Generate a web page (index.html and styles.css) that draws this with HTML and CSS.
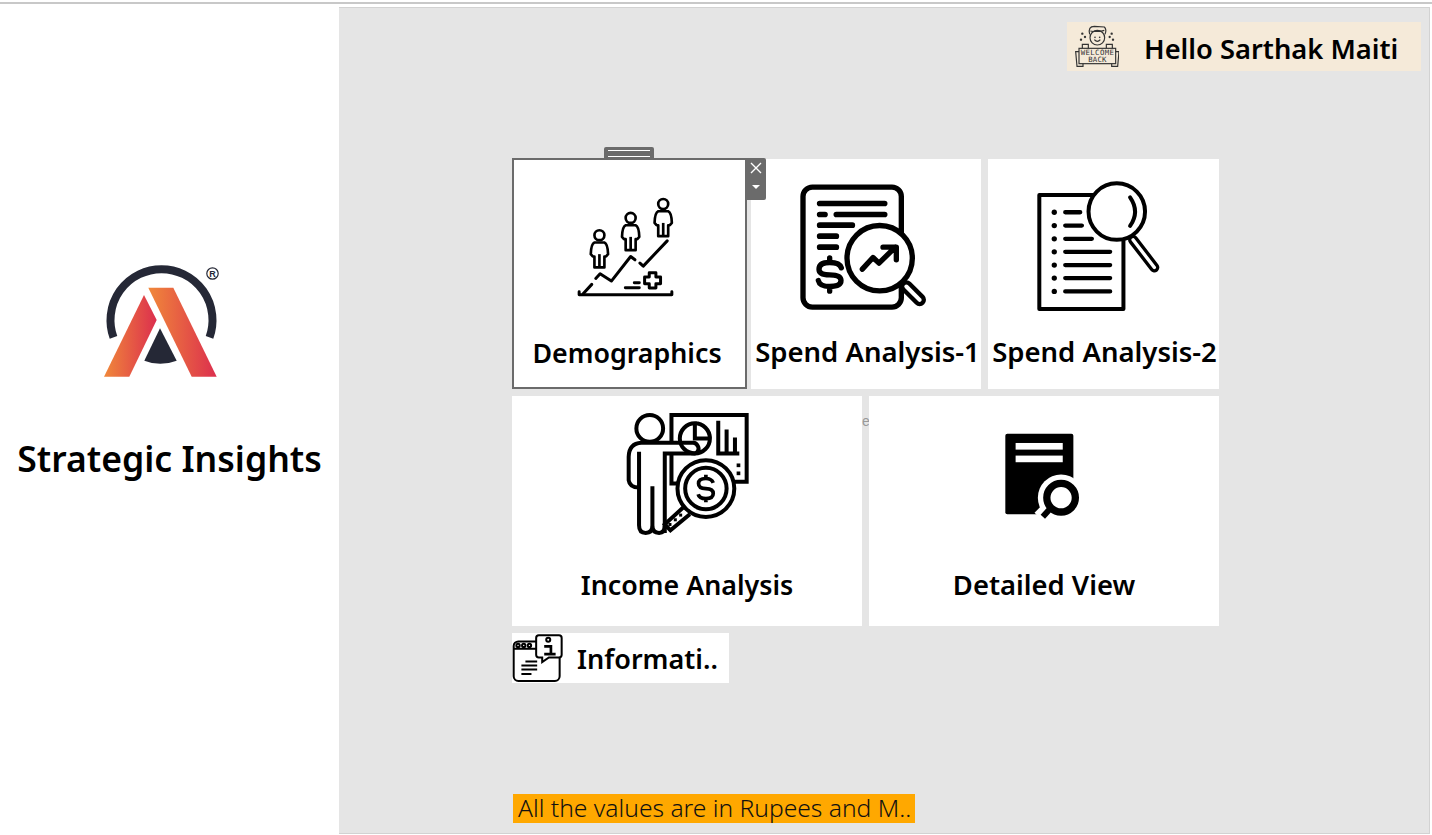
FILE: index.html
```html
<!doctype html>
<html>
	<head>
		<meta charset="utf-8" />
		<title>Strategic Insights</title>
		<link rel="stylesheet" href="styles.css">
	</head>
	<body>
		<div class="topline"></div>
		<div class="app">
			<aside class="side">
				<svg class="logo" viewBox="100 262 122 118" width="122" height="118">
					<defs>
						<linearGradient id="g-right" x1="0" y1="0" x2="1" y2="0">
							<stop offset="0" stop-color="#f0883a"/>
							<stop offset="1" stop-color="#dc2f4e"/>
						</linearGradient>
						<linearGradient id="g-left" x1="0" y1="0" x2="1" y2="0">
							<stop offset="0" stop-color="#f0883a"/>
							<stop offset="1" stop-color="#dc2f4e"/>
						</linearGradient>
					</defs>
					<path d="M113.5 342 A51 51 0 1 1 209.5 342" transform="translate(0 -4.6)" fill="none" stroke="#252836" stroke-width="8"/>
					<path d="M148.3 287.7 H173.3 L216.7 376.7 H191.7 Z" fill="url(#g-right)"/>
					<path d="M144 295 L156.7 320 L129.3 376.7 H104 Z" fill="url(#g-left)"/>
					<path d="M160 328.3 L176.7 360.7 Q160 367 144.3 360.7 Z" fill="#252836"/>
					<circle cx="212.5" cy="273.5" r="5.7" fill="none" stroke="#252836" stroke-width="1.2"/>
					<text x="212.5" y="276.9" class="logo-r">R</text>
				</svg>
				<h1 class="brand">Strategic Insights</h1>
			</aside>

			<main class="canvas">
				<div class="hello">
					<svg class="hello-icon" viewBox="15 15 135 135" width="45" height="45">
						<g fill="none" stroke="#333" stroke-width="3.5">
							<path d="M62 46 Q56 22 76 22 L106 24 Q114 32 108 46 M64 36 Q85 40 106 34"/>
							<circle cx="85" cy="56" r="22"/>
							<path d="M76 62 Q85 72 94 62"/>
							<path d="M40 88 V76 H58 V88 M112 88 V76 H130 V88"/>
							<rect x="30" y="88" width="110" height="46"/>
							<path d="M30 98 H20 L24 142 H42 V134 M140 98 H150 L146 142 H128 V134"/>
						</g>
						<g fill="#333">
							<circle cx="78" cy="55" r="2.5"/>
							<circle cx="92" cy="55" r="2.5"/>
							<circle cx="40" cy="44" r="3.5"/>
							<circle cx="48" cy="54" r="3.5"/>
							<circle cx="36" cy="62" r="3.5"/>
							<circle cx="128" cy="44" r="3.5"/>
							<circle cx="122" cy="54" r="3.5"/>
							<circle cx="132" cy="62" r="3.5"/>
						</g>
						<text x="35" y="108" class="hello-sign" textLength="100">WELCOME</text>
						<text x="58" y="128" class="hello-sign" textLength="54">BACK</text>
					</svg>
					<span class="hello-name">Hello Sarthak Maiti</span>
				</div>

				<div class="board">
					<div class="row">
						<a class="tile tile-demo is-selected">
							<span class="grip"></span>
							<span class="controls">
								<svg viewBox="0 0 12 12" width="12" height="12"><path d="M1 1 L11 11 M11 1 L1 11" stroke="#fff" stroke-width="1.4"/></svg>
								<i class="caret"></i>
							</span>
							<svg class="icon icon-demo" viewBox="210 170 300 310" width="100" height="103">
								<defs>
									<g id="person" fill="none" stroke="#000" stroke-width="8" stroke-linejoin="round">
										<circle cx="283" cy="288" r="15"/>
										<path d="M268 310 H298 Q308 314 309 345 L303 352 H298 V385 H268 V352 H263 L257 345 Q258 314 268 310 Z"/>
										<path d="M283 345 V385"/>
									</g>
								</defs>
								<use href="#person"/>
								<use href="#person" x="94" y="-52"/>
								<use href="#person" x="192" y="-94"/>
								<g fill="none" stroke="#000" stroke-width="9" stroke-linecap="round" stroke-linejoin="round">
									<path d="M222 458 V467 H501 V458"/>
									<path d="M234 464 L260 436"/>
									<path d="M272 418 L285 404 L319 426 L377 352 L390 362"/>
									<path d="M405 372 L415 381 L487 305"/>
									<path d="M361 446 H403 M388 431 H403"/>
									<path d="M433 401 H453 V414 H467 V434 H453 V447 H433 V434 H419 V414 H433 Z"/>
								</g>
							</svg>
							<span class="tile-label">Demographics</span>
						</a>
						<a class="tile tile-spend1">
							<svg class="icon icon-spend1" viewBox="145 70 390 380" width="130" height="127">
								<rect x="160" y="82" width="295" height="360" rx="28" fill="none" stroke="#000" stroke-width="16"/>
								<path d="M470 380 L510 420" stroke="#000" stroke-width="38" stroke-linecap="round"/>
								<path d="M470 380 L510 420" stroke="#fff" stroke-width="12" stroke-linecap="round"/>
								<circle cx="390" cy="295" r="98" fill="#fff" stroke="#000" stroke-width="16"/>
								<g fill="none" stroke="#000" stroke-linecap="round" stroke-linejoin="round">
									<path stroke-width="17" d="M210 131 H405 M210 164 H226 M260 164 H405 M210 196 H308 M210 229 H260 M210 262 H260"/>
									<path stroke-width="16" d="M275 324 Q270 308 240 308 Q208 308 208 328 Q208 345 240 345 Q274 345 274 362 Q274 380 240 380 Q210 380 206 362 M240 294 V308 M240 380 V394"/>
									<path stroke-width="16" d="M338 328 L370 293 L388 310 L437 262 M400 262 H440 V300"/>
								</g>
							</svg>
							<span class="tile-label">Spend Analysis-1</span>
						</a>
						<a class="tile tile-spend2">
							<svg class="icon icon-spend2" viewBox="150 60 380 400" width="127" height="133">
								<rect x="162" y="105" width="253" height="343" fill="none" stroke="#000" stroke-width="12" stroke-linejoin="round"/>
								<path d="M444 240 L508 323" stroke="#000" stroke-width="30" stroke-linecap="round"/>
								<path d="M444 240 L508 323" stroke="#fff" stroke-width="10" stroke-linecap="round"/>
								<circle cx="395" cy="155" r="85" fill="#fff" stroke="#000" stroke-width="12"/>
								<g fill="none" stroke="#000" stroke-linecap="round">
									<path stroke-width="12" d="M435 112 Q465 155 435 198"/>
									<path stroke-width="13" d="M240 157 H285 M240 197 H290 M240 237 H320 M240 276 H375 M240 316 H375 M240 355 H375 M240 395 H375"/>
								</g>
								<g fill="#000">
									<circle cx="207" cy="157" r="8"/>
									<circle cx="207" cy="197" r="8"/>
									<circle cx="207" cy="237" r="8"/>
									<circle cx="207" cy="276" r="8"/>
									<circle cx="207" cy="316" r="8"/>
									<circle cx="207" cy="355" r="8"/>
									<circle cx="207" cy="395" r="8"/>
								</g>
							</svg>
							<span class="tile-label">Spend Analysis-2</span>
						</a>
					</div>
					<div class="row">
						<a class="tile tile-wide tile-income">
							<svg class="icon icon-income" viewBox="70 30 380 380" width="127" height="127">
								<g fill="none" stroke="#000" stroke-width="12">
									<path d="M215 125 V45 H440 V245 H395 M215 160 V250 H240"/>
									<circle cx="150" cy="85" r="40"/>
									<path d="M285 70 A45 45 0 1 0 330 115 H285 Z M285 70 A45 45 0 0 1 330 115"/>
									<path d="M355 62 V160 H418 M380 88 V160 M405 112 V160"/>
									<path d="M195 398 V160 H285 Q300 155 295 140 Q290 128 280 128 H125 Q88 130 87 170 V240 Q90 262 118 262"/>
									<path d="M118 155 V375 Q118 398 138 398 Q158 398 158 375 V258 M158 375 Q158 398 178 398 Q195 398 195 375"/>
									<path d="M250 322 L195 372 L212 390 L270 342" fill="#fff"/>
									<circle cx="318" cy="265" r="85" fill="#fff"/>
									<circle cx="318" cy="265" r="62"/>
									<path stroke-width="11" d="M340 248 Q335 235 318 235 Q296 235 296 250 Q296 265 318 265 Q340 265 340 280 Q340 295 318 295 Q298 295 295 282 M318 224 V235 M318 295 V306"/>
								</g>
								<g fill="#000">
									<rect x="410" y="190" width="11" height="11"/>
									<rect x="410" y="214" width="11" height="11"/>
									<rect x="206" y="368" width="9" height="9"/>
									<rect x="222" y="354" width="9" height="9"/>
									<rect x="238" y="340" width="9" height="9"/>
								</g>
							</svg>
							<span class="tile-label">Income Analysis</span>
						</a>
						<span class="gap-mark">e</span>
						<a class="tile tile-wide tile-detail">
							<svg class="icon icon-detail" viewBox="70 40 235 265" width="78" height="88">
								<rect x="77" y="42" width="205" height="243" rx="6" fill="#000"/>
								<rect x="108" y="70" width="142" height="20" fill="#fff"/>
								<rect x="108" y="108" width="142" height="20" fill="#fff"/>
								<circle cx="245" cy="235" r="70" fill="#fff"/>
								<path d="M165 280 L185 300 L215 265 L195 250 Z" fill="#fff"/>
								<circle cx="245" cy="235" r="43" fill="#fff" stroke="#000" stroke-width="22"/>
								<path d="M212 268 L190 292" stroke="#000" stroke-width="18"/>
							</svg>
							<span class="tile-label">Detailed View</span>
						</a>
					</div>
				</div>

				<div class="info">
					<svg class="info-icon" viewBox="20 28 152 146" width="51" height="49">
						<g fill="none" stroke="#000" stroke-width="6">
							<rect x="25" y="50" width="137" height="118" rx="14"/>
							<path d="M25 72 H92"/>
							<circle cx="38" cy="62" r="5"/>
							<circle cx="55" cy="62" r="5"/>
							<circle cx="72" cy="62" r="5"/>
							<path d="M60 110 H95 M48 122 H95 M48 134 H95 M48 147 H78"/>
							<path d="M100 32 H160 Q168 32 168 40 V90 Q168 98 160 98 H130 L110 112 V98 H100 Q92 98 92 90 V40 Q92 32 100 32 Z" fill="#fff"/>
							<circle cx="128" cy="45" r="6"/>
							<path stroke-width="8" d="M116 65 H136 V88 M116 88 H150"/>
						</g>
					</svg>
					<span class="info-label">Informati..</span>
				</div>

				<div class="note">All the values are in Rupees and M..</div>
			</main>
		</div>
	</body>
</html>
```

FILE: styles.css
```css
* {
	box-sizing: border-box;
}

body {
	margin: 0;
	height: 835px;
	overflow: hidden;
	background: #fff;
	color: #000;
	font-family: "Noto Sans", sans-serif;
}

.topline {
	margin-top: 2px;
	height: 2px;
	background: #c8c8c8;
}

.app {
	display: flex;
	height: 831px;
}

/* left column */
.side {
	width: 339px;
	flex: none;
	display: flex;
	flex-direction: column;
	align-items: center;
}

.logo {
	display: block;
	margin: 258px 18px 0 0;
}

.logo-r {
	font: 700 9px "Liberation Sans", sans-serif;
	fill: #252836;
	text-anchor: middle;
}

.brand {
	margin: 53px 0 0;
	font-size: 35.6px;
	font-weight: 600;
	line-height: 50px;
	white-space: nowrap;
}

/* dashboard */
.canvas {
	flex: 1;
	display: flex;
	flex-direction: column;
	margin: 3px 2px 1px 0;
	padding: 14px 8px 0 173px;
	background: #e5e5e5;
	border: solid #d2d2d2;
	border-width: 1px 1px 1px 0;
}

.hello {
	align-self: flex-end;
	display: flex;
	align-items: center;
	width: 354px;
	height: 49px;
	padding-left: 7px;
	background: #f5ead9;
}

.hello-sign {
	font: 22px "DejaVu Sans Mono", monospace;
	fill: #333;
}

.hello-name {
	margin: 4px 0 0 25px;
	font-size: 27.3px;
	font-weight: 600;
	white-space: nowrap;
}

.board {
	margin-top: 88px;
	width: 707px;
	display: flex;
	flex-direction: column;
	gap: 7px;
}

.row {
	display: flex;
	height: 230px;
}

.tile {
	position: relative;
	display: flex;
	flex-direction: column;
	align-items: center;
	background: #fff;
}

.tile-demo {
	width: 235px;
	margin-right: 4px;
}

.tile-spend1 {
	width: 230px;
	margin-right: 7px;
}

.tile-spend2 {
	width: 231px;
}

.tile-wide {
	width: 350px;
}

.is-selected {
	z-index: 2;
	border: 2px solid #6b6b6b;
	margin-top: -1px;
	height: 231px;
}

.grip {
	position: absolute;
	top: -13px;
	left: 90px;
	width: 50px;
	height: 11px;
	background: #6b6b6b;
	border-radius: 2px 2px 0 0;
}

.grip::before {
	content: "";
	display: block;
	margin: 3px 4px 0;
	height: 5px;
	border: solid #fff;
	border-width: 1px 0;
}

.controls {
	position: absolute;
	top: -2px;
	right: -21px;
	width: 20px;
	height: 42px;
	background: #6b6b6b;
	border-radius: 0 2px 2px 0;
	display: flex;
	flex-direction: column;
	align-items: center;
	padding-top: 4px;
}

.caret {
	margin-top: 11px;
	border: solid transparent;
	border-width: 4px 4px 0;
	border-top-color: #fff;
}

.icon {
	display: block;
	flex: none;
}

.icon-demo {
	margin: 36px 9px 0 0;
}

.icon-spend1 {
	margin: 24px 6px 0 0;
}

.icon-spend2 {
	margin: 21px 10px 0 0;
}

.icon-income {
	margin: 14px 1px 0 0;
}

.icon-detail {
	margin: 37px 4px 0 0;
}

.tile-label {
	margin-top: auto;
	padding-bottom: 21px;
	font-size: 26.8px;
	font-weight: 600;
	line-height: 40px;
	white-space: nowrap;
}

.is-selected .tile-label {
	margin-right: 5px;
	padding-bottom: 14px;
}

.tile-spend1 .tile-label,
.tile-spend2 .tile-label {
	padding-bottom: 17px;
	font-size: 27.5px;
}

.tile-spend1 .tile-label {
	margin-left: 3px;
}

.tile-spend2 .tile-label {
	margin-left: 2px;
}

.tile-detail .tile-label {
	font-size: 27.4px;
}

.gap-mark {
	width: 7px;
	flex: none;
	overflow: hidden;
	padding-top: 15px;
	color: #999;
	font: 14px/20px "Liberation Sans", sans-serif;
}

.info {
	margin-top: 7px;
	width: 217px;
	height: 50px;
	display: flex;
	align-items: center;
	background: #fff;
}

.info-label {
	margin-left: 14px;
	font-size: 27px;
	font-weight: 600;
	white-space: nowrap;
}

.note {
	margin: auto 0 10px 1px;
	width: 402px;
	height: 29px;
	padding-left: 5px;
	background: #ffa800;
	color: #111;
	font-size: 24.6px;
	font-weight: 300;
	line-height: 28px;
	white-space: nowrap;
}
```
